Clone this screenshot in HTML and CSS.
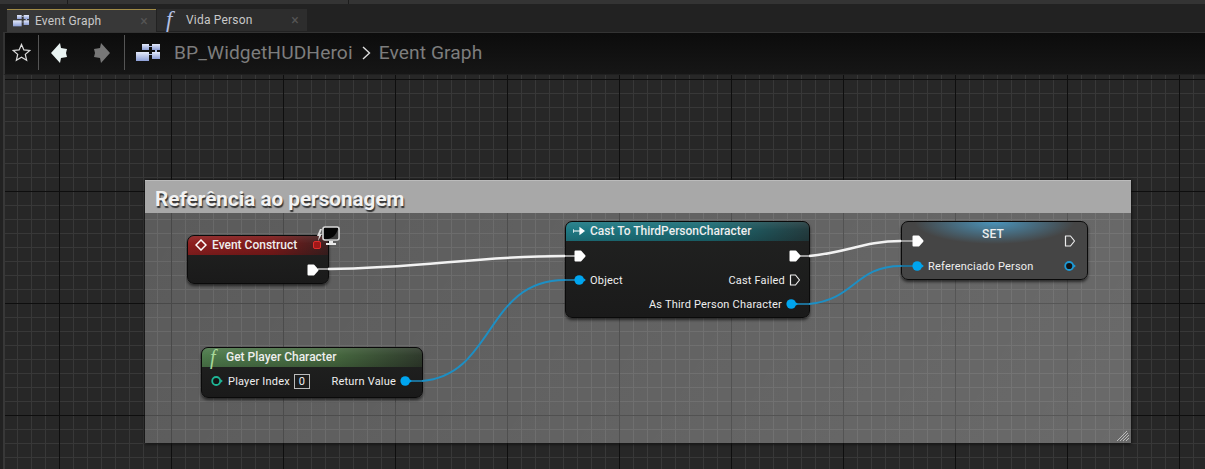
FILE: index.html
```html
<!DOCTYPE html>
<html lang="en">
<head>
    <meta charset="UTF-8">
    <title>Event Graph</title>
    <link rel="stylesheet" href="styles.css">
</head>
<body>
    <svg class="defs" width="0" height="0">
        <defs>
            <linearGradient id="block-fill" x1="0" y1="0" x2="0" y2="1">
                <stop offset="0" stop-color="#e4eafa"/>
                <stop offset="1" stop-color="#8c9ed6"/>
            </linearGradient>
            <symbol id="graph-icon" viewBox="0 0 24 18">
                <path d="M13 2h3v1h-3zM13 10h3v1h-3zM19 6h2v2h-2z" fill="#aebde6"/>
                <rect x="6" y="0" width="7" height="6" fill="url(#block-fill)"/>
                <rect x="16" y="0" width="8" height="6" fill="url(#block-fill)"/>
                <rect x="0" y="8" width="13" height="9" fill="url(#block-fill)"/>
                <rect x="16" y="8" width="8" height="7" fill="url(#block-fill)"/>
            </symbol>
            <symbol id="exec-on" viewBox="0 0 12 12">
                <path d="M1.500 1.500h5L10.500 6l-4 4.500h-5z" fill="#fff" stroke="#fff" stroke-width="2" stroke-linejoin="round"/>
            </symbol>
            <symbol id="exec-off" viewBox="0 0 12 12">
                <path d="M1.500 1h5L10.500 6l-4 5h-5z" fill="none" stroke="#eee" stroke-width="1.200" stroke-linejoin="round"/>
            </symbol>
            <symbol id="data-on" viewBox="0 0 12 12">
                <circle cx="5.200" cy="6" r="4.800" fill="#00a5ef"/>
                <path d="M9.500 4l2.300 2-2.300 2z" fill="#00a5ef"/>
            </symbol>
            <symbol id="data-off" viewBox="0 0 12 12">
                <circle cx="5.200" cy="6" r="4" fill="#141414" stroke="#1d9ad6" stroke-width="1.800"/>
                <path d="M9.500 4l2.300 2-2.300 2z" fill="#1d9ad6"/>
            </symbol>
            <symbol id="ref-off" viewBox="0 0 12 12">
                <circle cx="5.200" cy="6" r="4" fill="#141414" stroke="#1fb596" stroke-width="1.800"/>
                <path d="M9.500 4l2.300 2-2.300 2z" fill="#1fb596"/>
            </symbol>
        </defs>
    </svg>

    <div class="top-strip"></div>

    <div class="tabs">
        <div class="tab tab-active">
            <svg class="tab-icon"><use href="#graph-icon"/></svg>
            <span class="tab-label">Event Graph</span>
            <span class="tab-close">×</span>
        </div>
        <div class="tab">
            <span class="func-glyph">f</span>
            <span class="tab-label">Vida Person</span>
            <span class="tab-close">×</span>
        </div>
    </div>

    <div class="toolbar">
        <svg class="tool-star" viewBox="0 0 20 20">
            <path d="M10 1.500l2.500 5.800 6.200.6-4.700 4.100 1.400 6.100-5.400-3.200-5.400 3.200 1.400-6.100L1.300 7.900l6.200-.6z" fill="none" stroke="#ddd" stroke-width="1.300"/>
        </svg>
        <div class="tool-sep"></div>
        <svg class="tool-arrow tool-back" viewBox="0 0 17 20">
            <path d="M9 0l1 5 6 1-1 4 1 4-6 1-1 5L0 10z" fill="#e9f3f2"/>
        </svg>
        <svg class="tool-arrow tool-forward" viewBox="0 0 17 20">
            <path d="M8 0l-1 5-6 1 1 4-1 4 6 1 1 5 9-10z" fill="#777"/>
        </svg>
        <div class="tool-sep"></div>
        <svg class="crumb-icon"><use href="#graph-icon"/></svg>
        <span class="crumb">BP_WidgetHUDHeroi</span>
        <svg class="crumb-chevron" viewBox="0 0 9 14">
            <path d="M1 1l6.500 6L1 13" fill="none" stroke="#ddd" stroke-width="1.400"/>
        </svg>
        <span class="crumb">Event Graph</span>
    </div>

    <main class="graph">
        <section class="comment">
            <h2 class="comment-title">Referência ao personagem</h2>
            <svg class="comment-grip" viewBox="0 0 12 10">
                <path d="M0 10L10 0M3 10L11 2M6 10L12 4M9 10L12 7" stroke="#bbb" stroke-width="1"/>
            </svg>
        </section>

        <div class="node node-event">
            <div class="node-head head-red">
                <svg class="head-icon" viewBox="0 0 12 12">
                    <path d="M6 1l5 5-5 5-5-5z" fill="none" stroke="#fff" stroke-width="1.500"/>
                </svg>
                Event Construct
            </div>
            <div class="node-body">
                <div class="pin-row row-end">
                    <svg class="pin"><use href="#exec-on"/></svg>
                </div>
            </div>
            <div class="latent">
                <svg class="latent-icon" viewBox="0 0 24 20">
                    <path d="M4 3L1 10h2l-1 5 4-7H4l2-5z" fill="#ddd"/>
                    <rect x="7" y="1" width="16" height="13" rx="2" fill="#050505" stroke="#d8d8d8" stroke-width="1.600"/>
                    <path d="M12 13c5-1 8-4 10-10v10z" fill="#3c3c3c"/>
                    <path d="M13 15h4v2h3v2h-10v-2h3z" fill="#e8e8e8"/>
                </svg>
                <span class="latent-dot"></span>
            </div>
        </div>

        <div class="node node-getplayer">
            <div class="node-head head-green">
                <span class="func-glyph func-green">f</span>
                Get Player Character
            </div>
            <div class="node-body">
                <div class="pin-row">
                    <div class="pin-group">
                        <svg class="pin pin-ref"><use href="#ref-off"/></svg>
                        <span>Player Index</span>
                        <span class="pin-default">0</span>
                    </div>
                    <div class="pin-group">
                        <span>Return Value</span>
                        <svg class="pin"><use href="#data-on"/></svg>
                    </div>
                </div>
            </div>
        </div>

        <div class="node node-cast">
            <div class="node-head head-teal">
                <svg class="head-icon" viewBox="0 0 12 12">
                    <path d="M0 6h9M7 3l4 3-4 3z M0 4v4" fill="#fff" stroke="#fff" stroke-width="1.200"/>
                </svg>
                Cast To ThirdPersonCharacter
            </div>
            <div class="node-body">
                <div class="pin-row">
                    <svg class="pin"><use href="#exec-on"/></svg>
                    <svg class="pin"><use href="#exec-on"/></svg>
                </div>
                <div class="pin-row">
                    <div class="pin-group">
                        <svg class="pin"><use href="#data-on"/></svg>
                        <span>Object</span>
                    </div>
                    <div class="pin-group">
                        <span>Cast Failed</span>
                        <svg class="pin"><use href="#exec-off"/></svg>
                    </div>
                </div>
                <div class="pin-row row-end row-inset">
                    <div class="pin-group">
                        <span>As Third Person Character</span>
                        <svg class="pin"><use href="#data-on"/></svg>
                    </div>
                </div>
            </div>
        </div>

        <div class="node node-set">
            <div class="pin-row">
                <svg class="pin"><use href="#exec-on"/></svg>
                <span class="set-title">SET</span>
                <svg class="pin"><use href="#exec-off"/></svg>
            </div>
            <div class="pin-row">
                <div class="pin-group">
                    <svg class="pin"><use href="#data-on"/></svg>
                    <span>Referenciado Person</span>
                </div>
                <svg class="pin"><use href="#data-off"/></svg>
            </div>
        </div>

        <svg class="wires" viewBox="0 0 1200 394">
            <path class="wire wire-exec" d="M323 194C420 193 470 181 560 181"/>
            <path class="wire wire-exec" d="M804 181C840 178 860 166 896 166"/>
            <path class="wire wire-data" d="M417 306C490 300 480 205 560 205"/>
            <path class="wire wire-data" d="M804 229C850 225 850 191 896 191"/>
            <path class="stub stub-exec" d="M313 194h10M560 181h14M789 181h15M896 166h15"/>
            <path class="stub stub-data" d="M404 306h13M560 205h14M790 229h14M896 191h14"/>
        </svg>
    </main>
</body>
</html>
```

FILE: styles.css
```css
body {
    margin: 0;
    width: 1205px;
    height: 469px;
    overflow: hidden;
    display: flex;
    flex-direction: column;
    background: #222;
    font-family: Roboto, sans-serif;
    color: #eee;
}

.defs {
    position: absolute;
}

.top-strip {
    height: 4px;
    flex: none;
    margin-bottom: 5px;
    background-color: #343434;
    background-image: linear-gradient(90deg, transparent 67px, #1c1c1c 67px, #1c1c1c 68px, transparent 68px, transparent 348px, #1c1c1c 348px, #1c1c1c 349px, transparent 349px);
}

/* tabs */
.tabs {
    display: flex;
    height: 23px;
    flex: none;
    padding-left: 7px;
    gap: 1px;
}

.tab {
    width: 150px;
    height: 22px;
    box-sizing: border-box;
    display: flex;
    align-items: center;
    background: #2d2d2d;
    padding-left: 6px;
    font-size: 12px;
    letter-spacing: 0.2px;
    color: #c8c8c8;
}

.tab-active {
    width: 149px;
    height: 23px;
    background: #383838;
    border-top: 1px solid #a08a45;
}

.tab-icon {
    width: 16px;
    height: 12px;
    margin-right: 6px;
}

.func-glyph {
    font-family: "Liberation Serif", serif;
    font-style: italic;
    font-size: 23px;
    line-height: 20px;
    color: #b4c0e4;
    width: 14px;
    margin: 0 6px 0 3px;
}

.func-green {
    color: #a8d89a;
    font-size: 20px;
    width: 13px;
    margin: 0 3px 0 1px;
}

.tab-label {
    flex: 1;
}

.tab-close {
    color: #555;
    font-size: 14px;
    margin-right: 8px;
}

/* toolbar */
.toolbar {
    display: flex;
    align-items: center;
    height: 42px;
    flex: none;
    margin-left: 3px;
    padding: 0 0 2px 7px;
    box-sizing: border-box;
    background: linear-gradient(#0c0c0c, #161616);
    border-top: 1px solid #333;
    border-left: 2px solid #333;
    font-size: 19.200px;
    letter-spacing: 0.1px;
    color: #7d7d7d;
}

.tool-star {
    width: 19px;
    height: 19px;
}

.tool-sep {
    width: 1px;
    height: 35px;
    background: #555;
    margin-left: 7px;
}

.tool-arrow {
    width: 17px;
    height: 20px;
}

.tool-back {
    margin-left: 12px;
}

.tool-forward {
    margin-left: 25px;
    margin-right: 7px;
}

.crumb-icon {
    width: 24px;
    height: 18px;
    margin: 0 14px 0 11px;
}

.crumb-chevron {
    width: 9px;
    height: 14px;
    margin: 0 8px 0 9px;
}

/* graph canvas */
.graph {
    position: relative;
    flex: 1;
    margin-left: 3px;
    background-color: #272727;
    background-image:
        linear-gradient(90deg, #0e0e0e 1px, transparent 1px),
        linear-gradient(#0e0e0e 1px, transparent 1px),
        linear-gradient(90deg, #383838 1px, transparent 1px),
        linear-gradient(#383838 1px, transparent 1px);
    background-size: 112px 112px, 112px 112px, 14px 14px, 14px 14px;
    background-position: 54px 4px, 54px 4px, 12px 4px, 12px 4px;
    border-top: 1px solid #202020;
    border-left: 2px solid #383838;
    box-sizing: border-box;
}

.comment {
    position: absolute;
    left: 140px;
    top: 105px;
    width: 986px;
    height: 263px;
    background: linear-gradient(120deg, rgba(255, 255, 255, 0.24), rgba(255, 255, 255, 0.31));
    box-shadow: 0 1px 3px #111, 0 0 2px #111;
}

.comment-title {
    margin: 0;
    height: 33px;
    padding-left: 10px;
    box-sizing: border-box;
    background: #a8a8a8;
    border-top: 1px solid #bbb;
    font-size: 20.700px;
    font-weight: 700;
    line-height: 37px;
    color: #f2f2f2;
    text-shadow: 1px 2px 1px #333;
}

.comment-grip {
    position: absolute;
    right: 2px;
    bottom: 2px;
    width: 12px;
    height: 10px;
}

/* nodes */
.node {
    position: absolute;
    box-sizing: border-box;
    border-radius: 7px;
    background: linear-gradient(#212221, #1a1a1a);
    border: 1px solid #0a0a0a;
    box-shadow: 0 2px 3px rgba(0, 0, 0, 0.6);
    font-size: 11px;
    letter-spacing: 0.2px;
}

.node-event {
    left: 182px;
    top: 160px;
    width: 142px;
    height: 49px;
}

.node-getplayer {
    left: 196px;
    top: 272px;
    width: 222px;
    height: 51px;
}

.node-cast {
    left: 560px;
    top: 146px;
    width: 245px;
    height: 97px;
}

.node-set {
    left: 896px;
    top: 146px;
    width: 187px;
    height: 59px;
    padding: 7px 11px 0 10px;
    background: radial-gradient(ellipse 80px 22px at 50% 0, #4a93ba, #454545 100%);
}

.node-head {
    display: flex;
    align-items: center;
    height: 17px;
    padding: 0 0 2px 7px;
    border-radius: 6px 6px 0 0;
    font-size: 12px;
    font-weight: 500;
    letter-spacing: 0;
}

.head-red {
    background: linear-gradient(rgba(255, 255, 255, 0.08), transparent 40%, rgba(0, 0, 0, 0.15)), linear-gradient(90deg, #8e2020, #7c1a1a 60%, #3c2020);
}

.head-green {
    background: linear-gradient(rgba(255, 255, 255, 0.08), transparent 40%, rgba(0, 0, 0, 0.15)), linear-gradient(90deg, #4e7a4c, #46683f 60%, #2f3a2c);
}

.head-teal {
    background: linear-gradient(rgba(255, 255, 255, 0.08), transparent 40%, rgba(0, 0, 0, 0.15)), linear-gradient(90deg, #1f7a85, #1c6a72 60%, #243c3f);
}

.head-icon {
    width: 12px;
    height: 12px;
    margin-right: 5px;
}

.node-body {
    padding: 3px 9px 0 8px;
}

.node-cast .node-body {
    padding-right: 8px;
}

.pin-row {
    display: flex;
    align-items: center;
    justify-content: space-between;
    height: 24px;
}

.node-set .pin-row + .pin-row {
    margin-top: 1px;
}

.row-end {
    justify-content: flex-end;
}

.row-inset {
    margin-right: 3px;
}

.pin-group {
    display: flex;
    align-items: center;
    gap: 4px;
}

.pin {
    width: 12px;
    height: 12px;
    position: relative;
    z-index: 3;
}

.pin-ref {
    margin-right: 1px;
}

.pin-default {
    border: 1px solid #bbb;
    width: 14px;
    height: 13px;
    line-height: 13px;
    text-align: center;
}

.node-getplayer .node-body {
    padding: 2px 10px 0 9px;
}

.set-title {
    font-size: 12px;
    font-weight: 500;
    margin: -14px 2px 0 0;
}

.latent {
    position: absolute;
    right: -12px;
    top: -10px;
    width: 24px;
    height: 20px;
}

.latent-icon {
    display: block;
    width: 24px;
    height: 20px;
}

.latent-dot {
    position: absolute;
    left: -3px;
    bottom: -3px;
    width: 6px;
    height: 6px;
    background: #a01818;
    border: 1px solid #e02c2c;
    border-radius: 2px;
}

/* wires sit over the nodes but under the pins */
.wires {
    position: absolute;
    left: 0;
    top: 0;
    width: 1200px;
    height: 394px;
    z-index: 2;
    pointer-events: none;
}

.wire, .stub {
    fill: none;
    stroke-width: 2;
}

.wire-exec {
    stroke: #f2f2f2;
    stroke-width: 2.500;
}

.wire-data {
    stroke: #1d8fc4;
}

.stub-exec {
    stroke: #9a9a9a;
}

.stub-data {
    stroke: #1d6f96;
}
```
